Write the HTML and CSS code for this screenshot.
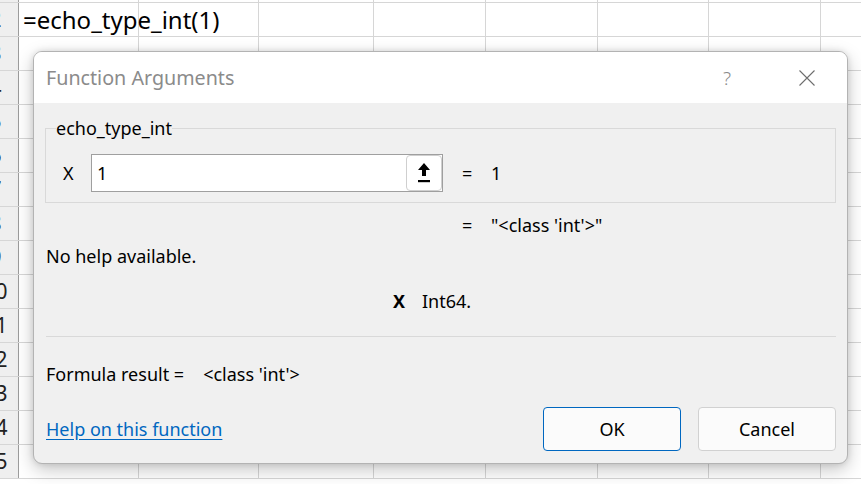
FILE: index.html
```html
<!DOCTYPE html>
<html>
<head>
<meta charset="utf-8">
<link rel="stylesheet" href="styles.css">
</head>
<body>
<div class="sheet">
  <div class="row first"><div class="hdr"></div><div class="c w120"></div><div class="c w120"></div><div class="c w115"></div><div class="c w112"></div><div class="c w112"></div><div class="c w111"></div><div class="c w112"></div><div class="c w112"></div></div>
  <div class="row"><div class="hdr">2</div><div class="c w120"><span class="formula">=echo_type_int(1)</span></div><div class="c w120"></div><div class="c w115"></div><div class="c w112"></div><div class="c w112"></div><div class="c w111"></div><div class="c w112"></div><div class="c w112"></div></div>
  <div class="row"><div class="hdr">3</div><div class="c w120"></div><div class="c w120"></div><div class="c w115"></div><div class="c w112"></div><div class="c w112"></div><div class="c w111"></div><div class="c w112"></div><div class="c w112"></div></div>
  <div class="row"><div class="hdr">4</div><div class="c w120"></div><div class="c w120"></div><div class="c w115"></div><div class="c w112"></div><div class="c w112"></div><div class="c w111"></div><div class="c w112"></div><div class="c w112"></div></div>
  <div class="row"><div class="hdr">5</div><div class="c w120"></div><div class="c w120"></div><div class="c w115"></div><div class="c w112"></div><div class="c w112"></div><div class="c w111"></div><div class="c w112"></div><div class="c w112"></div></div>
  <div class="row"><div class="hdr">6</div><div class="c w120"></div><div class="c w120"></div><div class="c w115"></div><div class="c w112"></div><div class="c w112"></div><div class="c w111"></div><div class="c w112"></div><div class="c w112"></div></div>
  <div class="row"><div class="hdr">7</div><div class="c w120"></div><div class="c w120"></div><div class="c w115"></div><div class="c w112"></div><div class="c w112"></div><div class="c w111"></div><div class="c w112"></div><div class="c w112"></div></div>
  <div class="row"><div class="hdr">8</div><div class="c w120"></div><div class="c w120"></div><div class="c w115"></div><div class="c w112"></div><div class="c w112"></div><div class="c w111"></div><div class="c w112"></div><div class="c w112"></div></div>
  <div class="row"><div class="hdr">9</div><div class="c w120"></div><div class="c w120"></div><div class="c w115"></div><div class="c w112"></div><div class="c w112"></div><div class="c w111"></div><div class="c w112"></div><div class="c w112"></div></div>
  <div class="row"><div class="hdr">10</div><div class="c w120"></div><div class="c w120"></div><div class="c w115"></div><div class="c w112"></div><div class="c w112"></div><div class="c w111"></div><div class="c w112"></div><div class="c w112"></div></div>
  <div class="row"><div class="hdr">11</div><div class="c w120"></div><div class="c w120"></div><div class="c w115"></div><div class="c w112"></div><div class="c w112"></div><div class="c w111"></div><div class="c w112"></div><div class="c w112"></div></div>
  <div class="row"><div class="hdr">12</div><div class="c w120"></div><div class="c w120"></div><div class="c w115"></div><div class="c w112"></div><div class="c w112"></div><div class="c w111"></div><div class="c w112"></div><div class="c w112"></div></div>
  <div class="row"><div class="hdr">13</div><div class="c w120"></div><div class="c w120"></div><div class="c w115"></div><div class="c w112"></div><div class="c w112"></div><div class="c w111"></div><div class="c w112"></div><div class="c w112"></div></div>
  <div class="row"><div class="hdr">14</div><div class="c w120"></div><div class="c w120"></div><div class="c w115"></div><div class="c w112"></div><div class="c w112"></div><div class="c w111"></div><div class="c w112"></div><div class="c w112"></div></div>
  <div class="row"><div class="hdr">15</div><div class="c w120"></div><div class="c w120"></div><div class="c w115"></div><div class="c w112"></div><div class="c w112"></div><div class="c w111"></div><div class="c w112"></div><div class="c w112"></div></div>
</div>

<div class="dialog">
  <div class="titlebar">
    <span class="title">Function Arguments</span>
    <span class="help">?</span>
    <svg class="close" width="16" height="16" viewBox="0 0 16 16"><path d="M0.5 0.5 L15.5 15.5 M15.5 0.5 L0.5 15.5" stroke="#6e6e6e" stroke-width="1.1" fill="none"/></svg>
  </div>
  <div class="body">
    <fieldset class="group">
      <legend>echo_type_int</legend>
      <div class="argrow">
        <span class="arglabel">X</span>
        <div class="input">
          <span class="inval">1</span>
          <span class="refbtn"><svg width="14" height="20" viewBox="0 0 14 20"><path d="M7 0 L13 7 L9 7 L9 13 L5 13 L5 7 L1 7 Z" fill="#000"/><rect x="1" y="17" width="12" height="2.2" fill="#000"/></svg></span>
        </div>
        <span class="eq">=</span>
        <span class="val">1</span>
      </div>
    </fieldset>
    <div class="result-row"><span class="eq">=</span><span class="val">"&lt;class 'int'&gt;"</span></div>
    <div class="nohelp">No help available.</div>
    <div class="argdesc"><b class="argname">X</b><span>Int64.</span></div>
    <div class="sep"></div>
    <div class="formula-result"><span>Formula result =</span><span class="fr-val">&lt;class 'int'&gt;</span></div>
    <div class="footer">
      <a class="link" href="#">Help on this function</a>
      <div class="buttons">
        <button class="btn ok">OK</button>
        <button class="btn">Cancel</button>
      </div>
    </div>
  </div>
</div>
</body>
</html>
```

FILE: styles.css
```css
html, body {
  margin: 0;
  padding: 0;
  background: #ffffff;
  overflow: hidden;
  width: 861px;
  height: 484px;
}
body {
  font-family: "Noto Sans", "Open Sans", sans-serif;
  position: relative;
}
.sheet {
  margin-left: -27px;
}
.row {
  display: flex;
  height: 34px;
  box-sizing: border-box;
  border-bottom: 1px solid #d6d6d6;
}
.row.first {
  height: 3px;
  overflow: hidden;
}
.hdr {
  width: 46px;
  flex: none;
  box-sizing: border-box;
  border-right: 1px solid #9c9c9c;
  background: #efefef;
  text-align: center;
  font-family: "Noto Sans", sans-serif;
  font-size: 21px;
  line-height: 33px;
  color: #222;
}
.c {
  flex: none;
  box-sizing: border-box;
  border-right: 1px solid #d6d6d6;
  position: relative;
  white-space: nowrap;
}
.w120 { width: 120px; }
.w115 { width: 115px; }
.w112 { width: 112px; }
.w111 { width: 111px; }
.formula {
  display: block;
  padding-left: 4px;
  font-family: "Noto Sans", sans-serif;
  font-size: 24px;
  line-height: 33px;
  color: #000;
  position: relative;
  z-index: 1;
}

.dialog {
  position: absolute;
  left: 33px;
  top: 51px;
  width: 815px;
  height: 413px;
  box-sizing: border-box;
  border: 1px solid #b3b3b3;
  border-radius: 9px;
  background: #f0f0f0;
  box-shadow: 0 6px 18px rgba(0,0,0,0.22), 0 0 6px rgba(0,0,0,0.12);
  overflow: hidden;
  color: #000;
  font-size: 18px;
}
.titlebar {
  height: 51px;
  background: #ffffff;
  display: flex;
  align-items: center;
  padding: 0 32px 0 12px;
}
.title {
  color: #8b8b8b;
  font-size: 19.7px;
  flex: 1;
}
.help {
  color: #8a8a8a;
  font-size: 19px;
  font-weight: 300;
  margin-right: 68px;
}
.close {
  display: block;
}
.body {
  padding: 15px 11px 0 12px;
}
.group {
  margin: 0 0 0 -1px;
  border: 1px solid #d9d9d9;
  padding: 16px 10px 10px 17px;
}
.group legend {
  padding: 0;
  margin-left: -7px;
  font-size: 18px;
  line-height: 20px;
}
.argrow {
  display: flex;
  align-items: center;
}
.arglabel {
  width: 28px;
}
.input {
  width: 352px;
  height: 38px;
  box-sizing: border-box;
  border: 1px solid #9f9f9f;
  background: #fff;
  display: flex;
  align-items: center;
  justify-content: space-between;
  padding-left: 5px;
}
.refbtn {
  width: 36px;
  height: 36px;
  box-sizing: border-box;
  border: 1px solid #cfcfcf;
  border-radius: 4px;
  display: flex;
  align-items: center;
  justify-content: center;
  background: #fff;
}
.refbtn svg { display: block; }
.eq {
  width: 29px;
  margin-left: 19px;
  flex: none;
}
.result-row {
  display: flex;
  margin-top: 12px;
  margin-left: 397px;
  line-height: 20px;
}
.nohelp {
  margin-top: 11px;
  line-height: 20px;
}
.argdesc {
  margin-top: 25px;
  margin-left: 347px;
  line-height: 20px;
  display: flex;
}
.argname {
  width: 29px;
}
.sep {
  margin-top: 25px;
  height: 1px;
  background: #d9d9d9;
}
.formula-result {
  margin-top: 27px;
  line-height: 20px;
  display: flex;
}
.fr-val {
  margin-left: 19px;
}
.footer {
  margin-top: 23px;
  display: flex;
  align-items: center;
  justify-content: space-between;
}
.link {
  color: #0067c0;
  text-decoration: underline;
  text-underline-offset: 3px;
}
.buttons {
  display: flex;
  gap: 17px;
}
.btn {
  width: 138px;
  height: 44px;
  box-sizing: border-box;
  border: 1px solid #d1d1d1;
  border-radius: 4px;
  background: #fbfbfb;
  font-family: "Noto Sans", sans-serif;
  font-size: 18px;
  color: #000;
}
.btn.ok {
  border: 1.5px solid #0067c0;
}
```
